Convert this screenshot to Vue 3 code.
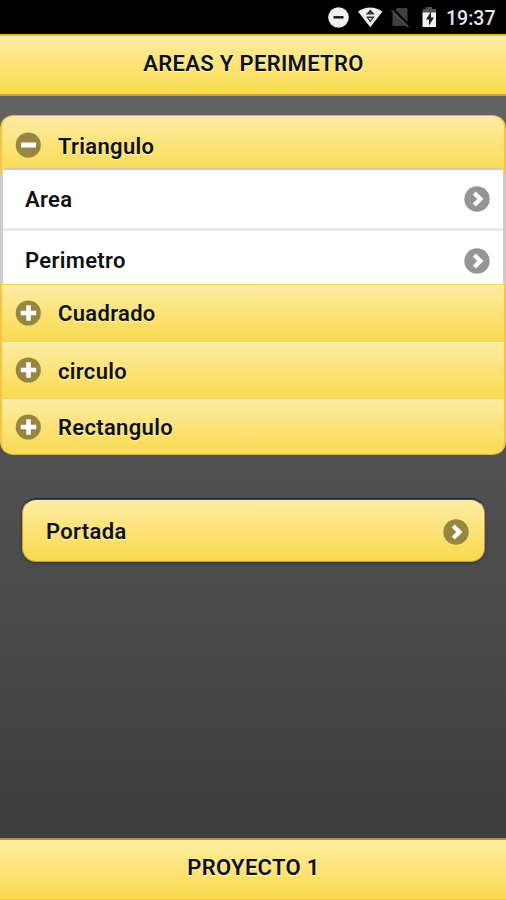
<script setup>
const sections = ['Cuadrado', 'circulo', 'Rectangulo']
const links = ['Area', 'Perimetro']
</script>

<template>
  <div class="screen">
    <div class="status">
      <svg class="status-icons" viewBox="0 0 124 34" width="124" height="34">
        <circle cx="12.5" cy="17.5" r="10.3" fill="#f0f0f0" />
        <path d="M7.5 17.3h10" stroke="#111" stroke-width="2.4" />
        <path d="M32 11.5Q44 3.5 56.500 11.500L44.300 27.300Z" fill="#eee" />
        <path d="M44.300 9.500l4.500 5h-9zM40 16.500h8.600l-4.300 6z" fill="#333" />
        <path d="M42.500 18h3.600l-1.800 2.500z" fill="#ddd" />
        <path d="M66.500 13l5-5H80q1.500 0 1.500 1.500V26h-15z" fill="#404040" />
        <path d="M67.500 9.500l17 17" stroke="#000" stroke-width="2" />
        <path d="M65.500 10.200l17 17" stroke="#4c4c4c" stroke-width="1.600" />
        <path d="M96.500 9h3.500V7h6v2h4v5h-13.500z" fill="#555" />
        <path d="M96.500 12.500h13.500v14.500H96.500z" fill="#f2f2f2" />
        <path d="M105 11.500l-5 8h3v6l5-8h-3z" fill="#222" />
      </svg>
      <span class="clock">19:37</span>
    </div>
    <header class="bar header"><h1>AREAS Y PERIMETRO</h1></header>
    <main>
      <div class="accordion">
        <div class="row first">
          <svg class="icon" viewBox="0 0 26 26"><circle cx="13.300" cy="13" r="12.600" fill="#978640" /><path d="M6 13h15" stroke="#fff" stroke-width="5" /></svg>
          <span>Triangulo</span>
        </div>
        <div class="panel">
          <div v-for="l in links" :key="l" class="link" :class="l.toLowerCase()">
            <span>{{ l }}</span>
            <svg class="icon" viewBox="0 0 26 26"><circle cx="13" cy="13" r="12.700" fill="#959595" /><path d="M10.300 7l6 6-6 6" fill="none" stroke="#fff" stroke-width="4.400" /></svg>
          </div>
        </div>
        <div v-for="s in sections" :key="s" class="row" :class="s.toLowerCase()">
          <svg class="icon" viewBox="0 0 26 26"><circle cx="13.300" cy="13" r="12.600" fill="#978640" /><path d="M5.800 13h15.400M13.500 5.300v15.400" stroke="#fff" stroke-width="4.600" /></svg>
          <span>{{ s }}</span>
        </div>
      </div>
      <div class="button">
        <span>Portada</span>
        <svg class="icon" viewBox="0 0 26 26"><circle cx="13" cy="13" r="12.700" fill="#978640" /><path d="M10.300 7l6 6-6 6" fill="none" stroke="#fff" stroke-width="4.400" /></svg>
      </div>
    </main>
    <footer class="bar footer"><h4>PROYECTO 1</h4></footer>
  </div>
</template>

<style>
body { margin: 0; background: #3c3c3c; }
</style>

<style scoped>
* { box-sizing: border-box; }
.screen {
  width: 506px;
  height: 900px;
  display: flex;
  flex-direction: column;
  overflow: hidden;
  background: linear-gradient(#686868, #3b3b3b);
  font: 600 22px/26px Roboto, sans-serif;
  letter-spacing: 0.32px;
  color: #111;
}
.status {
  height: 34px;
  flex: none;
  display: flex;
  align-items: center;
  justify-content: flex-end;
  padding-right: 11px;
  background: #000;
}
.status-icons { margin-right: -4px; }
.clock { color: #e6e6e6; font-size: 19.500px; font-weight: 500; letter-spacing: 0; padding-top: 4px; width: 49px; white-space: nowrap; }
.bar {
  flex: none;
  display: flex;
  justify-content: center;
  background: linear-gradient(#ffeda1, #f9da4d);
  text-shadow: 0 1px 1px #fff;
}
.header { height: 62px; border-top: 2px solid #eebb36; border-bottom: 2px solid #cba238; padding-top: 15px; }
.footer { height: 62px; border-top: 2px solid #bd923a; border-bottom: 1px solid #f4c43b; padding-top: 15px; }
h1, h4 { margin: 0 0 0 1px; font-size: inherit; font-weight: 600; line-height: 26px; }
main { flex: 1; padding-top: 19px; }
.accordion { border-radius: 13px; overflow: hidden; }
.row {
  height: 57px;
  display: flex;
  align-items: center;
  padding: 0 13px;
  border: 2px solid #f5c544;
  border-top: 1px solid #f2d16a;
  border-bottom: 0;
  background: linear-gradient(#fdeca3, #f9da50);
  text-shadow: 0 1px 1px #fff8d5;
}
.row span { margin-left: 17px; padding-top: 2px; }
.row.first { height: 59px; border-top-color: #e4b846; border-radius: 13px 13px 0 0; }
.row.first span { padding-top: 3px; }
.row.circulo span { padding-top: 3px; }
.row:last-child { border-bottom: 1px solid #d8b044; border-radius: 0 0 13px 13px; }
.icon { width: 26px; height: 26px; flex: none; }
.panel {
  position: relative;
  margin: -6px 3px 0;
  height: 116px;
  background: #fff;
  border-top: 2px solid #d2ccbb;
  box-shadow: -3px 6px 0 #ccc, 3px 6px 0 #ccc;
}
.link { display: flex; justify-content: space-between; padding: 0 13px 0 22px; }
.area { height: 61px; padding-top: 16px; border-bottom: 3px solid #e7e7e7; }
.perimetro { padding-top: 17px; }
.area span { padding-top: 1px; }
.panel + .row, .row + .row { position: relative; }
.button {
  height: 63px;
  margin: 44px 21px 0 22px;
  padding: 0 15px 0 23px;
  display: flex;
  align-items: center;
  justify-content: space-between;
  border: 1px solid #c39d40;
  border-top-color: #32485a;
  border-radius: 14px;
  background: linear-gradient(#ffeda3, #f9d84b);
  box-shadow: 0 1px 3px #333, 0 -1px 0 #183440;
  text-shadow: 0 1px 1px #fff8d5;
}
.button span { padding-top: 3px; }
.button .icon { margin-top: 2px; }
</style>
